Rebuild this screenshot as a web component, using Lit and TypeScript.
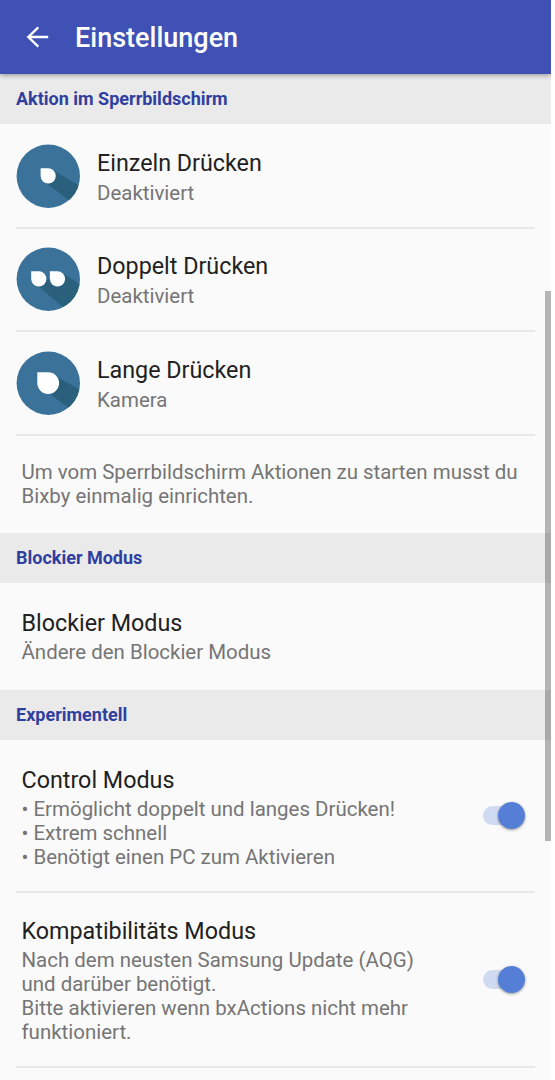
import { LitElement, html, css, svg } from "lit";
import { customElement, property } from "lit/decorators.js";

@customElement("press-icon")
class PressIcon extends LitElement {
  @property() kind = "single";

  static styles = css`
    :host { display: block; width: 64px; height: 64px; }
    svg { display: block; }
  `;

  render() {
    const shapes: Record<string, unknown> = {
      single: svg`
        <path d="M38 26.500 L68 44.500 L57 59.500 L29 38Z" fill="#2a607c"/>
        <path d="M24.600 24.200H32.200A7.600 7.600 0 1 1 24.600 31.800Z" fill="#fff"/>`,
      double: svg`
        <path d="M48 27 L70 41 L50 63 L20 37Z" fill="#2a607c"/>
        <path d="M15.200 24.200H22.800A7.600 7.600 0 1 1 15.200 31.800Z" fill="#fff"/>
        <path d="M33.900 24.200H41.500A7.600 7.600 0 1 1 33.900 31.800Z" fill="#fff"/>`,
      long: svg`
        <path d="M40 25.500 L67 40.500 L56 60 L28 38Z" fill="#2a607c"/>
        <path d="M21.300 21.200H32.200A10.900 10.900 0 1 1 21.300 32.100Z" fill="#fff"/>`,
    };
    return html`<svg width="64" height="64" viewBox="0 0 64 64">
      <defs><clipPath id="disc"><circle cx="32.300" cy="32.200" r="31.700"/></clipPath></defs>
      <g clip-path="url(#disc)">
        <rect width="64" height="64" fill="#3a7299"/>
        ${shapes[this.kind]}
      </g>
    </svg>`;
  }
}

@customElement("app-root")
class AppRoot extends LitElement {
  static styles = css`
    :host {
      display: block; width: 555px; height: 1080px; overflow: hidden;
      background: #fff; font-family: Roboto, "Liberation Sans", sans-serif;
    }
    .screen {
      position: relative; width: 551px; height: 1080px; overflow: hidden;
      background: #fafafa; display: flex; flex-direction: column;
    }
    .bar {
      position: relative; z-index: 1; flex: none; height: 74px;
      background: #3f51b5; color: #fff; display: flex; align-items: center;
      padding-left: 26px; box-sizing: border-box;
      box-shadow: 0 1px 5px rgba(0, 0, 0, 0.4);
    }
    .back { display: block; flex: none; margin-right: 26px; }
    .bar h1 { margin: 0; font-size: 27px; font-weight: 500; line-height: 32px; padding-top: 2px; white-space: nowrap; }
    h2 {
      margin: 0; flex: none; height: 50px; line-height: 50px; padding-left: 16px;
      background: #eaeaea; color: #303f9f; font-size: 18px; font-weight: 700; white-space: nowrap;
    }
    .row { flex: none; margin: 0 16px; display: flex; box-sizing: border-box; border-bottom: 2px solid #e8e8e8; }
    .press { height: 103px; padding-top: 19px; gap: 17px; }
    .press.single { height: 105px; padding-top: 20px; }
    .press.double { padding-top: 18.400px; }
    .press.long { height: 104px; }
    .press .text { padding-top: 4px; }
    .note { flex: none; height: 97px; box-sizing: border-box; padding: 24px 0 0 21.500px; }
    .plain { height: 107px; padding: 25px 0 0 5.500px; border-bottom: 0; }
    .control { height: 153px; padding: 25px 10px 0 5.500px; justify-content: space-between; }
    .compat { height: 175px; padding: 23px 10px 0 5.500px; justify-content: space-between; }
    .title { font-size: 23.300px; line-height: 30px; margin-bottom: 2px; color: #212121; white-space: nowrap; }
    .press .title { margin-bottom: 2.500px; }
    .sub { font-size: 20.470px; line-height: 24px; color: #757575; white-space: nowrap; }
    .toggle { display: flex; align-items: center; width: 42px; height: 27px; }
    .control .toggle { margin-top: 37px; }
    .compat .toggle { margin-top: 50px; }
    .track { width: 32px; height: 19px; border-radius: 10px; background: #d0dbf2; }
    .knob {
      width: 27px; height: 27px; margin-left: -17px; border-radius: 50%; flex: none;
      background: #557fd7; box-shadow: 0 1px 3px rgba(0, 0, 0, 0.4);
    }
    .scroll { position: absolute; right: 0; top: 290.500px; width: 6px; height: 550px; background: rgba(0, 0, 0, 0.28); }
  `;

  private press(kind: string, title: string, value: string) {
    return html`<div class="row press ${kind}">
      <press-icon kind=${kind}></press-icon>
      <div class="text"><div class="title">${title}</div><div class="sub">${value}</div></div>
    </div>`;
  }

  private option(name: string, title: string, lines: string[], toggle = true) {
    return html`<div class="row ${name}">
      <div>
        <div class="title">${title}</div>
        ${lines.map((line) => html`<div class="sub">${line}</div>`)}
      </div>
      ${toggle ? html`<div class="toggle"><div class="track"></div><div class="knob"></div></div>` : ""}
    </div>`;
  }

  render() {
    return html`<div class="screen">
      <header class="bar">
        <svg class="back" width="23" height="22" viewBox="0 0 23 22" fill="none" stroke="#fff" stroke-width="2.300">
          <path d="M22.200 11H3M12.300 1.300L2.300 11l10 9.700"/>
        </svg>
        <h1>Einstellungen</h1>
      </header>
      <h2>Aktion im Sperrbildschirm</h2>
      ${this.press("single", "Einzeln Drücken", "Deaktiviert")}
      ${this.press("double", "Doppelt Drücken", "Deaktiviert")}
      ${this.press("long", "Lange Drücken", "Kamera")}
      <div class="note">
        <div class="sub">Um vom Sperrbildschirm Aktionen zu starten musst du</div>
        <div class="sub">Bixby einmalig einrichten.</div>
      </div>
      <h2>Blockier Modus</h2>
      ${this.option("plain", "Blockier Modus", ["Ändere den Blockier Modus"], false)}
      <h2>Experimentell</h2>
      ${this.option("control", "Control Modus", [
        "• Ermöglicht doppelt und langes Drücken!",
        "• Extrem schnell",
        "• Benötigt einen PC zum Aktivieren",
      ])}
      ${this.option("compat", "Kompatibilitäts Modus", [
        "Nach dem neusten Samsung Update (AQG)",
        "und darüber benötigt.",
        "Bitte aktivieren wenn bxActions nicht mehr",
        "funktioniert.",
      ])}
      <div class="scroll"></div>
    </div>`;
  }
}
